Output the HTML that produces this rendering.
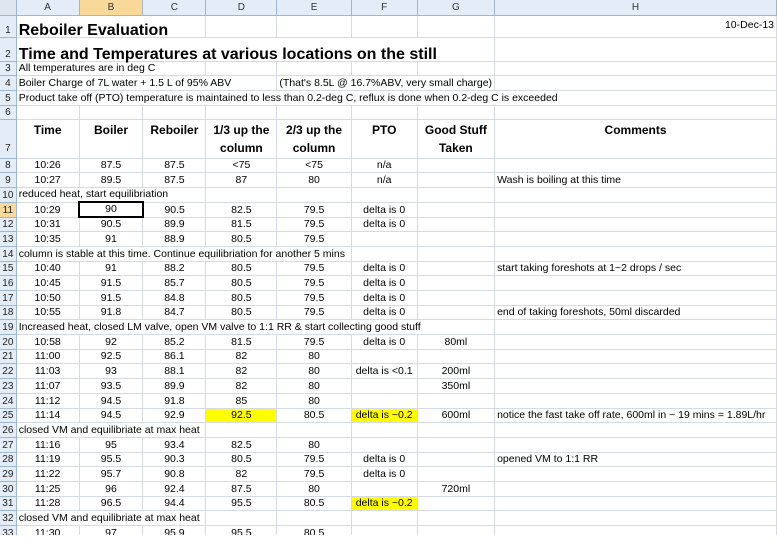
<!DOCTYPE html>
<html><head><meta charset="utf-8"><style>
html,body{margin:0;padding:0;background:#fff;}
#wrap{position:relative;width:777px;height:535px;overflow:hidden;}
table{border-collapse:collapse;table-layout:fixed;font-family:"Liberation Sans",sans-serif;font-size:10.5px;color:#000;}
td{border-right:1px solid #d6dbe3;border-bottom:1px solid #d6dbe3;padding:0 2px;white-space:nowrap;overflow:visible;text-align:center;vertical-align:bottom;line-height:13px;}
td.l{text-align:left;}
td.r{text-align:right;}
td.rh{background:#e4ecf7;border-right:1px solid #9eb6ce;border-bottom:1px solid #9eb6ce;color:#222;padding:0;font-size:10px;text-align:center;}
tr.ch td{background:#e4ecf7;border-bottom:1px solid #9eb6ce;border-right:1px solid #9eb6ce;color:#333;font-size:10px;vertical-align:middle;}
td.sel{background:#f9d99a !important;}
td.y{background:#ffff00;}
td.b{border:2px solid #000;}
.t1{font-size:16px;font-weight:bold;}
.h7 td{font-weight:bold;font-size:12px;line-height:18px;vertical-align:top;white-space:normal;padding-top:1px;}
.h7 td.rh{font-weight:normal;font-size:10px;vertical-align:bottom;}
tr.d{height:14.7px;}
</style></head><body><div id="wrap">
<table>
<colgroup><col style="width:19px"><col style="width:63px"><col style="width:64px"><col style="width:63px"><col style="width:73px"><col style="width:71px"><col style="width:63px"><col style="width:74px"><col style="width:287px"></colgroup>
<tr class="ch" style="height:15px"><td style="background:#dfe6f0"></td><td>A</td><td class="sel">B</td><td>C</td><td>D</td><td>E</td><td>F</td><td>G</td><td>H</td></tr>
<tr style="height:22px"><td class="rh">1</td><td colspan="3" class="l t1">Reboiler Evaluation</td><td></td><td></td><td></td><td></td><td class="r" style="vertical-align:top;padding-top:3px">10-Dec-13</td></tr>
<tr style="height:24px"><td class="rh">2</td><td colspan="7" class="l t1">Time and Temperatures at various locations on the still</td><td></td></tr>
<tr style="height:14px"><td class="rh">3</td><td colspan="3" class="l">All temperatures are in deg C</td><td></td><td></td><td></td><td></td><td></td></tr>
<tr style="height:15px"><td class="rh">4</td><td colspan="4" class="l">Boiler Charge of 7L water + 1.5 L of 95% ABV</td><td colspan="3" class="l">(That's 8.5L @ 16.7%ABV, very small charge)</td><td></td></tr>
<tr style="height:15px"><td class="rh">5</td><td colspan="8" class="l">Product take off (PTO) temperature is maintained to less than 0.2-deg C, reflux is done when 0.2-deg C is exceeded</td></tr>
<tr style="height:13px"><td class="rh">6</td><td></td><td></td><td></td><td></td><td></td><td></td><td></td><td></td></tr>
<tr class="h7" style="height:39px"><td class="rh">7</td><td>Time</td><td>Boiler</td><td>Reboiler</td><td>1/3 up the column</td><td>2/3 up the column</td><td>PTO</td><td>Good Stuff Taken</td><td>Comments</td></tr>
<tr class="d"><td class="rh">8</td><td>10:26</td><td>87.5</td><td>87.5</td><td>&lt;75</td><td>&lt;75</td><td>n/a</td><td></td><td></td></tr>
<tr class="d"><td class="rh">9</td><td>10:27</td><td>89.5</td><td>87.5</td><td>87</td><td>80</td><td>n/a</td><td></td><td class="l">Wash is boiling at this time</td></tr>
<tr class="d"><td class="rh">10</td><td colspan="3" class="l">reduced heat, start equilibriation</td><td></td><td></td><td></td><td></td><td></td></tr>
<tr class="d"><td class="rh sel">11</td><td>10:29</td><td class="b">90</td><td>90.5</td><td>82.5</td><td>79.5</td><td>delta is 0</td><td></td><td></td></tr>
<tr class="d"><td class="rh">12</td><td>10:31</td><td>90.5</td><td>89.9</td><td>81.5</td><td>79.5</td><td>delta is 0</td><td></td><td></td></tr>
<tr class="d"><td class="rh">13</td><td>10:35</td><td>91</td><td>88.9</td><td>80.5</td><td>79.5</td><td></td><td></td><td></td></tr>
<tr class="d"><td class="rh">14</td><td colspan="5" class="l">column is stable at this time. Continue equilibriation for another 5 mins</td><td></td><td></td><td></td></tr>
<tr class="d"><td class="rh">15</td><td>10:40</td><td>91</td><td>88.2</td><td>80.5</td><td>79.5</td><td>delta is 0</td><td></td><td class="l">start taking foreshots at 1~2 drops / sec</td></tr>
<tr class="d"><td class="rh">16</td><td>10:45</td><td>91.5</td><td>85.7</td><td>80.5</td><td>79.5</td><td>delta is 0</td><td></td><td></td></tr>
<tr class="d"><td class="rh">17</td><td>10:50</td><td>91.5</td><td>84.8</td><td>80.5</td><td>79.5</td><td>delta is 0</td><td></td><td></td></tr>
<tr class="d"><td class="rh">18</td><td>10:55</td><td>91.8</td><td>84.7</td><td>80.5</td><td>79.5</td><td>delta is 0</td><td></td><td class="l">end of taking foreshots, 50ml discarded</td></tr>
<tr class="d"><td class="rh">19</td><td colspan="7" class="l">Increased heat, closed LM valve, open VM valve to 1:1 RR &amp; start collecting good stuff</td><td></td></tr>
<tr class="d"><td class="rh">20</td><td>10:58</td><td>92</td><td>85.2</td><td>81.5</td><td>79.5</td><td>delta is 0</td><td>80ml</td><td></td></tr>
<tr class="d"><td class="rh">21</td><td>11:00</td><td>92.5</td><td>86.1</td><td>82</td><td>80</td><td></td><td></td><td></td></tr>
<tr class="d"><td class="rh">22</td><td>11:03</td><td>93</td><td>88.1</td><td>82</td><td>80</td><td>delta is &lt;0.1</td><td>200ml</td><td></td></tr>
<tr class="d"><td class="rh">23</td><td>11:07</td><td>93.5</td><td>89.9</td><td>82</td><td>80</td><td></td><td>350ml</td><td></td></tr>
<tr class="d"><td class="rh">24</td><td>11:12</td><td>94.5</td><td>91.8</td><td>85</td><td>80</td><td></td><td></td><td></td></tr>
<tr class="d"><td class="rh">25</td><td>11:14</td><td>94.5</td><td>92.9</td><td class="y">92.5</td><td>80.5</td><td class="y">delta is ~0.2</td><td>600ml</td><td class="l">notice the fast take off rate, 600ml in ~ 19 mins = 1.89L/hr</td></tr>
<tr class="d"><td class="rh">26</td><td colspan="3" class="l">closed VM and equilibriate at max heat</td><td></td><td></td><td></td><td></td><td></td></tr>
<tr class="d"><td class="rh">27</td><td>11:16</td><td>95</td><td>93.4</td><td>82.5</td><td>80</td><td></td><td></td><td></td></tr>
<tr class="d"><td class="rh">28</td><td>11:19</td><td>95.5</td><td>90.3</td><td>80.5</td><td>79.5</td><td>delta is 0</td><td></td><td class="l">opened VM to 1:1 RR</td></tr>
<tr class="d"><td class="rh">29</td><td>11:22</td><td>95.7</td><td>90.8</td><td>82</td><td>79.5</td><td>delta is 0</td><td></td><td></td></tr>
<tr class="d"><td class="rh">30</td><td>11:25</td><td>96</td><td>92.4</td><td>87.5</td><td>80</td><td></td><td>720ml</td><td></td></tr>
<tr class="d"><td class="rh">31</td><td>11:28</td><td>96.5</td><td>94.4</td><td>95.5</td><td>80.5</td><td class="y">delta is ~0.2</td><td></td><td></td></tr>
<tr class="d"><td class="rh">32</td><td colspan="3" class="l">closed VM and equilibriate at max heat</td><td></td><td></td><td></td><td></td><td></td></tr>
<tr class="d"><td class="rh">33</td><td>11:30</td><td>97</td><td>95.9</td><td>95.5</td><td>80.5</td><td></td><td></td><td></td></tr>
</table>
</div></body></html>
